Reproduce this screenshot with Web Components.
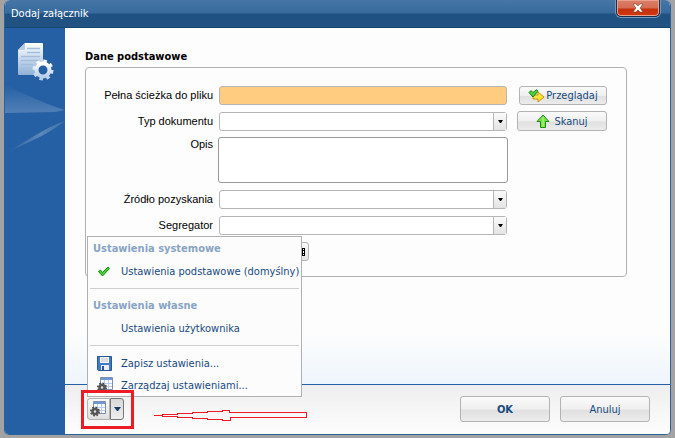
<!DOCTYPE html>
<html lang="pl">
<head>
<meta charset="utf-8">
<meta name="viewport" content="width=device-width, initial-scale=1">
<title>Dodaj załącznik</title>
<style>
  body {
    margin: 0;
    background: #a3a3a3;
    font: 11px "DejaVu Sans Condensed", "DejaVu Sans", sans-serif;
  }
</style>
</head>
<body>

<c-dialog label="Dodaj załącznik">
  <c-group label="Dane podstawowe">
    <c-field type="text" label="Pełna ścieżka do pliku" required>
      <c-button slot="action" icon="browse" label="Przeglądaj"></c-button>
    </c-field>
    <c-field type="select" label="Typ dokumentu">
      <c-button slot="action" class="wide" icon="up" label="Skanuj"></c-button>
    </c-field>
    <c-field type="textarea" label="Opis"></c-field>
    <c-field type="select" label="Źródło pozyskania"></c-field>
    <c-field type="select" label="Segregator"></c-field>
    <c-more></c-more>
  </c-group>
  <c-settings slot="footer"></c-settings>
  <c-arrow slot="footer"></c-arrow>
  <c-button slot="actions" class="large strong" label="OK"></c-button>
  <c-button slot="actions" class="large" label="Anuluj"></c-button>
</c-dialog>

<script>
const icons = {
  browse: `
    <svg width="17" height="14" viewBox="0 0 17 14">
      <path d="M5 6h5V3l6 5-6 5v-3H5z" fill="#ffe23a" stroke="#c9940c"/>
      <path d="M1 3.500l2-2 2 2L8.500.700l1.500 1.500L5 8z" fill="#4fd136" stroke="#15820f"/>
    </svg>`,
  up: `
    <svg width="14" height="15" viewBox="0 0 14 15">
      <path d="M7 1l6 6.500H9.500v6h-5v-6H1z" fill="#7be34a" stroke="#1d8a12" stroke-linejoin="round"/>
      <path d="M7 3v9.500" stroke="#b4f58c"/>
    </svg>`,
  check: `
    <svg width="14" height="11" viewBox="0 0 14 11">
      <path d="M1.500 5.500L3.500 4l2 2.500 5.500-5.500 1.500 1.500L5.500 10z" fill="#3fd42e" stroke="#178c12"/>
    </svg>`,
  save: `
    <svg width="15" height="15" viewBox="0 0 15 15">
      <path d="M.5.500h14v14h-13l-1-1z" fill="#3f7cc8" stroke="#27579a"/>
      <path d="M3 1h9v6H3z" fill="#f4f4f2"/>
      <path d="M4 3h7M4 5h7" stroke="#c5c5c5"/>
      <path d="M4 9h8v5H4z" fill="#e7eef7"/>
      <path d="M5 10h2v4H5z" fill="#27579a"/>
    </svg>`,
  table: `
    <svg width="17" height="16" viewBox="0 0 17 16">
      <path d="M3.500.500h12v12h-12z" fill="#fff" stroke="#7d8fae"/>
      <path d="M4 1h11v2H4z" fill="#6f98da"/>
      <path d="M4 6.500h11M4 9.500h11M7.500 3v9M11.500 3v9" stroke="#b6cdf0"/>
      <circle cx="5" cy="10.500" r="4" fill="none" stroke="#444" stroke-width="2" stroke-dasharray="1.570 1.570"/>
      <circle cx="5" cy="10.500" r="2.500" fill="#ddd" stroke="#555" stroke-width="2.500"/>
    </svg>`
};

class Dialog extends HTMLElement {
  constructor() {
    super();
    this.attachShadow({ mode: 'open' });
  }

  connectedCallback() {
    this.shadowRoot.innerHTML = `
      <style>
        :host {
          display: grid;
          grid-template: 28px 1fr / 60px 1fr;
          box-sizing: border-box;
          min-height: calc(100vh - 3px);
          margin: 0 4px 3px;
          border: 1px solid #2863a0;
          border-top: none;
          border-radius: 6px 6px 5px 5px;
          background: #fdfdfd;
          overflow: hidden;
        }
        header {
          grid-column: 1 / 3;
          display: flex;
          justify-content: space-between;
          align-items: center;
          padding: 0 10px 0 6px;
          background: linear-gradient(#4676a8, #386a9d 13px, #1f5183 14px, #215282 27px, #16456f 27px);
        }
        h1 {
          margin: 0;
          color: #fff;
          font-size: 11px;
          font-weight: normal;
          line-height: 16px;
        }
        .close {
          align-self: flex-start;
          display: flex;
          justify-content: center;
          align-items: center;
          width: 44px;
          height: 17px;
          padding: 0;
          border: 1px solid #16304f;
          border-top: none;
          border-radius: 0 0 5px 5px;
          box-shadow: inset 0 0 0 1px #e9a18c, 0 0 0 1px #7898bb;
          background: linear-gradient(#d9806a, #d66c52 8px, #c5300c 9px, #cf3a12);
        }
        aside {
          background: #2660a4;
          color: #fff;
        }
        aside svg {
          display: block;
        }
        section {
          display: flex;
          flex-direction: column;
          min-width: 0;
        }
        main {
          flex: 1;
          padding: 20px 43px 20px 20px;
          background: linear-gradient(#fdfdfd 85%, #eef5fc);
        }
        footer {
          display: flex;
          align-items: flex-start;
          gap: 20px;
          height: 49px;
          padding: 0 20px 0 16px;
          border-top: 1px solid #2660a4;
          background: linear-gradient(#eee, #fdfdfd);
        }
        .actions {
          display: flex;
          gap: 10px;
          margin: 11px 0 0 auto;
        }
      </style>
      <header>
        <h1>${this.getAttribute('label')}</h1>
        <button class="close" type="button" aria-label="Zamknij">
          <svg width="12" height="10" viewBox="0 0 12 10">
            <path d="M1 1h3l2 2 2-2h3L8 5l3 4H8L6 7 4 9H1l3-4z" fill="#fff" stroke="#70301f" stroke-width=".5"/>
          </svg>
        </button>
      </header>
      <aside>
        <svg width="60" height="130" viewBox="0 0 60 130" aria-hidden="true">
          <defs>
            <linearGradient id="paper" x2="0" y2="1">
              <stop stop-color="#fff"/>
              <stop offset="1" stop-color="#8fb0d6"/>
            </linearGradient>
            <linearGradient id="gear" x2="0" y2="1">
              <stop stop-color="#fff"/>
              <stop offset="1" stop-color="#b9cfe8"/>
            </linearGradient>
            <linearGradient id="ray" x2="0" y2="1">
              <stop stop-color="#fff" stop-opacity="0"/>
              <stop offset="1" stop-color="#fff" stop-opacity=".2"/>
            </linearGradient>
            <linearGradient id="beam">
              <stop stop-color="#fff" stop-opacity="0"/>
              <stop offset=".6" stop-color="#fff" stop-opacity=".25"/>
              <stop offset="1" stop-color="#fff" stop-opacity=".1"/>
            </linearGradient>
          </defs>
          <path d="M0 57C20 66 42 77 60 82L50 84 0 85z" fill="url(#ray)"/>
          <path d="M0 125C18 116 40 99 60 93 42 107 22 115 0 125z" fill="url(#beam)"/>
          <path d="M20 15h17q1 0 1 1v30q0 1-1 1H14q-1 0-1-1V22z" fill="url(#paper)"/>
          <path d="M13 22l7-7v6q0 1-1 1z" fill="#b9cbe0"/>
          <path d="M22 20.500h13M22 24.500h13M16 28.500h19M16 32.500h19M16 36.500h12M16 40.500h10" stroke="#a3bedd" stroke-width="1.500"/>
          <circle cx="38" cy="42" r="8" fill="#2660a4" opacity=".6"/>
          <circle cx="38" cy="42" r="9" fill="none" stroke="url(#gear)" stroke-width="3" stroke-dasharray="3.534 3.534"/>
          <circle cx="38" cy="42" r="6.500" fill="#2660a4" stroke="url(#gear)" stroke-width="4"/>
        </svg>
      </aside>
      <section>
        <main><slot></slot></main>
        <footer>
          <slot name="footer"></slot>
          <div class="actions"><slot name="actions"></slot></div>
        </footer>
      </section>
    `;
  }
}

class Group extends HTMLElement {
  constructor() {
    super();
    this.attachShadow({ mode: 'open' });
  }

  connectedCallback() {
    this.shadowRoot.innerHTML = `
      <style>
        :host {
          display: block;
        }
        h2 {
          margin: 0 0 2px;
          color: #000;
          font-size: 11px;
          line-height: 17px;
        }
        div {
          display: flex;
          flex-direction: column;
          gap: 7px;
          padding: 18px 19px 15px 0;
          border: 1px solid #b0b0b0;
          border-radius: 4px;
        }
      </style>
      <h2>${this.getAttribute('label')}</h2>
      <div><slot></slot></div>
    `;
  }
}

class Field extends HTMLElement {
  constructor() {
    super();
    this.attachShadow({ mode: 'open' });
  }

  connectedCallback() {
    const type = this.getAttribute('type');
    const controls = {
      text: '<input id="control" type="text">',
      select: '<select id="control"><option></option></select>',
      textarea: '<textarea id="control"></textarea>'
    };
    this.shadowRoot.innerHTML = `
      <style>
        :host {
          display: grid;
          grid-template-columns: 127px 1fr 90px;
          column-gap: 6px;
          align-items: center;
        }
        label {
          color: #000;
          font: 11px/19px "Liberation Sans", Arial, sans-serif;
          text-align: right;
        }
        .control {
          position: relative;
          margin-right: 4px;
        }
        .control.textarea {
          margin: -1px 3px 0 -1px;
        }
        .textarea-label {
          align-self: start;
          line-height: 12px;
        }
        input, select, textarea {
          display: block;
          box-sizing: border-box;
          width: 100%;
          height: 19px;
          margin: 0;
          padding: 0 4px;
          border: 1px solid #b5b5b5;
          border-radius: 3px;
          background: #fff;
          font: inherit;
          appearance: none;
        }
        textarea {
          height: 46px;
          border-color: #999;
          resize: none;
        }
        :host([required]) input {
          background: #ffcc80;
        }
        .arrow {
          position: absolute;
          inset: 1px 1px 1px auto;
          display: flex;
          justify-content: center;
          align-items: center;
          width: 12px;
          border-left: 1px solid #b5b5b5;
          background: linear-gradient(#fafafa, #e4e4e4);
          pointer-events: none;
        }
      </style>
      <label for="control" class="${type}-label">${this.getAttribute('label')}</label>
      <div class="control ${type}">
        ${controls[type]}
        ${type === 'select' ? '<span class="arrow"><svg width="5" height="3"><path d="M0 0h5L3 3H2z"/></svg></span>' : ''}
      </div>
      <slot name="action"></slot>
    `;
  }
}

class Button extends HTMLElement {
  constructor() {
    super();
    this.attachShadow({ mode: 'open' });
  }

  connectedCallback() {
    this.shadowRoot.innerHTML = `
      <style>
        :host {
          display: block;
          margin-left: 2px;
        }
        :host(.wide) {
          margin: -1px 0 0;
        }
        button {
          display: flex;
          justify-content: center;
          align-items: center;
          gap: 1px;
          box-sizing: border-box;
          width: 100%;
          height: 19px;
          padding: 0;
          border: 1px solid #b3b3b3;
          border-radius: 3px;
          background: linear-gradient(#fafafa, #efefef 50%, #e0e0e0 55%, #ececec);
          color: #174a80;
          font: inherit;
          white-space: nowrap;
        }
        :host(.wide) button {
          gap: 4px;
          height: 20px;
        }
        :host(.large) {
          width: 90px;
          margin: 0;
        }
        :host(.large) button {
          height: 26px;
        }
        :host(.strong) button {
          font-weight: bold;
        }
      </style>
      <button type="button">${icons[this.getAttribute('icon')] || ''}<span>${this.getAttribute('label')}</span></button>
    `;
  }
}

class More extends HTMLElement {
  constructor() {
    super();
    this.attachShadow({ mode: 'open' });
  }

  connectedCallback() {
    this.shadowRoot.innerHTML = `
      <style>
        :host {
          display: block;
          padding-left: 133px;
        }
        button {
          display: flex;
          justify-content: flex-end;
          align-items: center;
          width: 90px;
          height: 19px;
          padding: 0 3px;
          border: 1px solid #b3b3b3;
          border-radius: 3px;
          background: linear-gradient(#fafafa, #e4e4e4);
        }
      </style>
      <button type="button" aria-label="Kalendarz">
        <svg width="5" height="8"><path d="M0 0h5v8H0z"/><path d="M1 1h1v1H1zM3 1h1v1H3zM1 3h1v2H1zM3 3h1v2H3zM1 6h1v1H1zM3 6h1v1H3z" fill="#fff"/></svg>
      </button>
    `;
  }
}

class Settings extends HTMLElement {
  constructor() {
    super();
    this.attachShadow({ mode: 'open' });
  }

  connectedCallback() {
    this.shadowRoot.innerHTML = `
      <style>
        :host {
          display: block;
          position: relative;
          color: #174a80;
        }
        .split {
          position: relative;
          display: flex;
          margin-top: 5px;
          padding: 5px 7px 6px 3px;
          border: 3px solid #ed1c24;
          z-index: 2;
        }
        .split button {
          display: flex;
          justify-content: center;
          align-items: center;
          box-sizing: border-box;
          width: 23px;
          height: 22px;
          padding: 0;
          border: 1px solid #b3b3b3;
          border-radius: 3px 0 0 3px;
          background: linear-gradient(#fafafa, #dedede);
        }
        .split .drop {
          width: 14px;
          border-color: #777;
          border-radius: 0 3px 3px 0;
          background: linear-gradient(#d8d8d8, #eee);
        }
        .menu {
          position: absolute;
          left: 6px;
          bottom: 32px;
          padding: 1px 2px 0;
          border: 1px solid #b0b0b0;
          background: #fcfcfc;
          z-index: 1;
        }
        h3 {
          margin: 0;
          padding-left: 3px;
          color: #88a4c4;
          font-size: 11px;
          line-height: 22px;
        }
        .menu button {
          display: grid;
          grid-template-columns: 24px auto;
          justify-content: start;
          align-items: center;
          width: 100%;
          height: 22px;
          padding: 0 0 0 7px;
          border: none;
          background: none;
          color: inherit;
          font: inherit;
          text-align: left;
          white-space: nowrap;
        }
        .menu span {
          grid-column: 2;
        }
        hr {
          margin: 6px 0;
          border: none;
          border-top: 1px solid #cfcfcf;
        }
      </style>
      <div class="split">
        <button type="button" aria-label="Ustawienia">${icons.table}</button>
        <button class="drop" type="button" aria-label="Rozwiń">
          <svg width="7" height="4"><path d="M0 0h7L4 4H3z" fill="#173a66"/></svg>
        </button>
      </div>
      <div class="menu">
        <h3>Ustawienia systemowe</h3>
        <button type="button">${icons.check}<span>Ustawienia podstawowe (domyślny)</span></button>
        <hr>
        <h3>Ustawienia własne</h3>
        <button type="button"><span>Ustawienia użytkownika</span></button>
        <hr>
        <button type="button">${icons.save}<span>Zapisz ustawienia...</span></button>
        <button type="button">${icons.table}<span>Zarządzaj ustawieniami...</span></button>
      </div>
    `;
  }
}

class Arrow extends HTMLElement {
  constructor() {
    super();
    this.attachShadow({ mode: 'open' });
  }

  connectedCallback() {
    this.shadowRoot.innerHTML = `
      <style>
        :host {
          display: block;
          padding-top: 25px;
        }
        svg {
          display: block;
        }
      </style>
      <svg width="153" height="12" viewBox="0 0 153 12" aria-hidden="true">
        <path d="M0 5.500h8v-1h15v-1h15v-1h15v-1h15v-1h7v2h77v5H76v3h-8v-1H53v-1H38v-1H23v-1H8v-1H0" fill="none" stroke="#ed1c24" shape-rendering="crispEdges"/>
      </svg>
    `;
  }
}

customElements.define('c-dialog', Dialog);
customElements.define('c-group', Group);
customElements.define('c-field', Field);
customElements.define('c-button', Button);
customElements.define('c-more', More);
customElements.define('c-settings', Settings);
customElements.define('c-arrow', Arrow);
</script>
</body>
</html>
